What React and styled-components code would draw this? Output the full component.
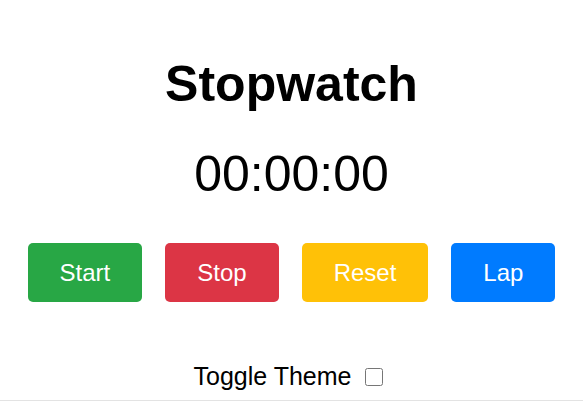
import React, { useState, useRef, useEffect } from 'react';
import styled, { createGlobalStyle } from 'styled-components';

const GlobalStyle = createGlobalStyle`
  body {
    margin: 0;
    font-family: "Liberation Sans", Arial, sans-serif;
    background: ${(p) => (p.dark ? '#222' : '#fff')};
    color: ${(p) => (p.dark ? '#fff' : '#000')};
  }
`;

const Page = styled.div`
  display: flex;
  flex-direction: column;
  align-items: center;
  min-height: 401px;
  border-bottom: 1px solid #e3e3e3;
  box-sizing: border-box;
`;

const Title = styled.h1`
  font-size: 50px;
  font-weight: bold;
  margin: 55px 0 0;
`;

const Time = styled.div`
  font-size: 50px;
  margin-top: 32px;
`;

const Controls = styled.div`
  display: flex;
  gap: 23px;
  margin-top: 40px;
`;

const colors = {
  start: '#28a745',
  stop: '#dc3545',
  reset: '#ffc107',
  lap: '#007bff',
};

const Button = styled.button`
  font-family: inherit;
  font-size: 24px;
  line-height: 27px;
  padding: 16px 32px;
  border: none;
  border-radius: 5px;
  color: #fff;
  background: ${(p) => colors[p.$kind]};
  cursor: pointer;
`;

const ThemeRow = styled.label`
  display: flex;
  align-items: center;
  gap: 14px;
  font-size: 25px;
  margin-top: 60px;
`;

const Check = styled.input`
  width: 18px;
  height: 18px;
  margin: 0 6px 0 0;
`;

function format(ms) {
  const m = Math.floor(ms / 60000);
  const s = Math.floor((ms % 60000) / 1000);
  const c = Math.floor((ms % 1000) / 10);
  return [m, s, c].map((n) => String(n).padStart(2, '0')).join(':');
}

export default function App() {
  const [elapsed, setElapsed] = useState(0);
  const [running, setRunning] = useState(false);
  const [laps, setLaps] = useState([]);
  const [dark, setDark] = useState(false);
  const timer = useRef(null);

  useEffect(() => {
    if (!running) return undefined;
    const startAt = Date.now() - elapsed;
    timer.current = setInterval(() => setElapsed(Date.now() - startAt), 10);
    return () => clearInterval(timer.current);
  }, [running]);

  return (
    <>
      <GlobalStyle dark={dark} />
      <Page>
        <Title>Stopwatch</Title>
        <Time>{format(elapsed)}</Time>
        <Controls>
          <Button $kind="start" onClick={() => setRunning(true)}>Start</Button>
          <Button $kind="stop" onClick={() => setRunning(false)}>Stop</Button>
          <Button
            $kind="reset"
            onClick={() => {
              setRunning(false);
              setElapsed(0);
              setLaps([]);
            }}
          >
            Reset
          </Button>
          <Button $kind="lap" onClick={() => setLaps([...laps, elapsed])}>Lap</Button>
        </Controls>
        <ThemeRow>
          Toggle Theme
          <Check type="checkbox" checked={dark} onChange={(e) => setDark(e.target.checked)} />
        </ThemeRow>
      </Page>
    </>
  );
}
